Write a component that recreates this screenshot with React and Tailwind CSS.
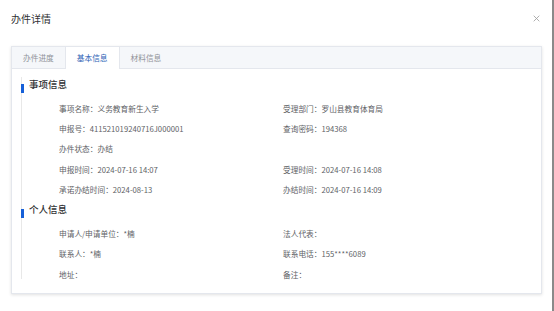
const FONT = { fontFamily: '"Noto Sans CJK SC", "Noto Sans", sans-serif' };

const ITEM_ROWS = [
  ['事项名称：义务教育新生入学', '受理部门：罗山县教育体育局'],
  ['申报号：411521019240716J000001', '查询密码：194368'],
  ['办件状态：办结', ''],
  ['申报时间：2024-07-16 14:07', '受理时间：2024-07-16 14:08'],
  ['承诺办结时间：2024-08-13', '办结时间：2024-07-16 14:09'],
];

const PERSON_ROWS = [
  ['申请人/申请单位：*楠', '法人代表：'],
  ['联系人：*楠', '联系电话：155****6089'],
  ['地址：', '备注：'],
];

function Heading({ children }) {
  return (
    <div className="relative flex h-[22px] items-center pl-[7px] text-[9.5px] font-medium text-[#303133]">
      <span className="absolute left-[-1px] top-[6.5px] h-[9px] w-[2.5px] bg-[#1660d8]" />
      {children}
    </div>
  );
}

function Rows({ rows }) {
  return (
    <div className="mt-[7px] mb-[2px] flex flex-col">
      {rows.map((r, i) => (
        <div key={i} className="grid h-[20.4px] grid-cols-[224px_1fr] items-center pl-[37px] text-[7.7px] text-[#606266]">
          <span>{r[0]}</span>
          <span>{r[1]}</span>
        </div>
      ))}
    </div>
  );
}

export default function App() {
  return (
    <div className="flex h-[311px] w-[554px] overflow-hidden bg-[#8a8a8a]" style={FONT}>
      <div className="flex h-full w-[552px] flex-col bg-white">
        <div className="flex h-[36px] items-center justify-between pl-[11px] pr-[12px]">
          <span className="text-[10px] text-[#303133]">办件详情</span>
          <svg width="7" height="7" viewBox="0 0 10 10" className="text-[#a0a0a0]">
            <path d="M1 1L9 9M9 1L1 9" stroke="currentColor" strokeWidth="1.2" />
          </svg>
        </div>
        <div className="ml-[11px] mt-[10px] h-[248px] w-[531px] border border-[#e4e7ed] bg-white shadow-[0_1px_3px_rgba(0,0,0,0.12)]">
          <div className="flex h-[22px] border-b border-[#e4e7ed] bg-[#f5f7fa] text-[7.7px] text-[#909399]">
            <div className="flex items-center px-[11px]">办件进度</div>
            <div className="-mb-px flex items-center border-x border-[#e4e7ed] bg-white px-[11px] text-[#2f63b6]">基本信息</div>
            <div className="flex items-center px-[11px]">材料信息</div>
          </div>
          <div className="pl-[9px] pt-[8px]">
            <div className="flex h-[202px] flex-col border-l border-[#e8e8e8]">
              <Heading>事项信息</Heading>
              <Rows rows={ITEM_ROWS} />
              <Heading>个人信息</Heading>
              <Rows rows={PERSON_ROWS} />
            </div>
          </div>
        </div>
      </div>
    </div>
  );
}
